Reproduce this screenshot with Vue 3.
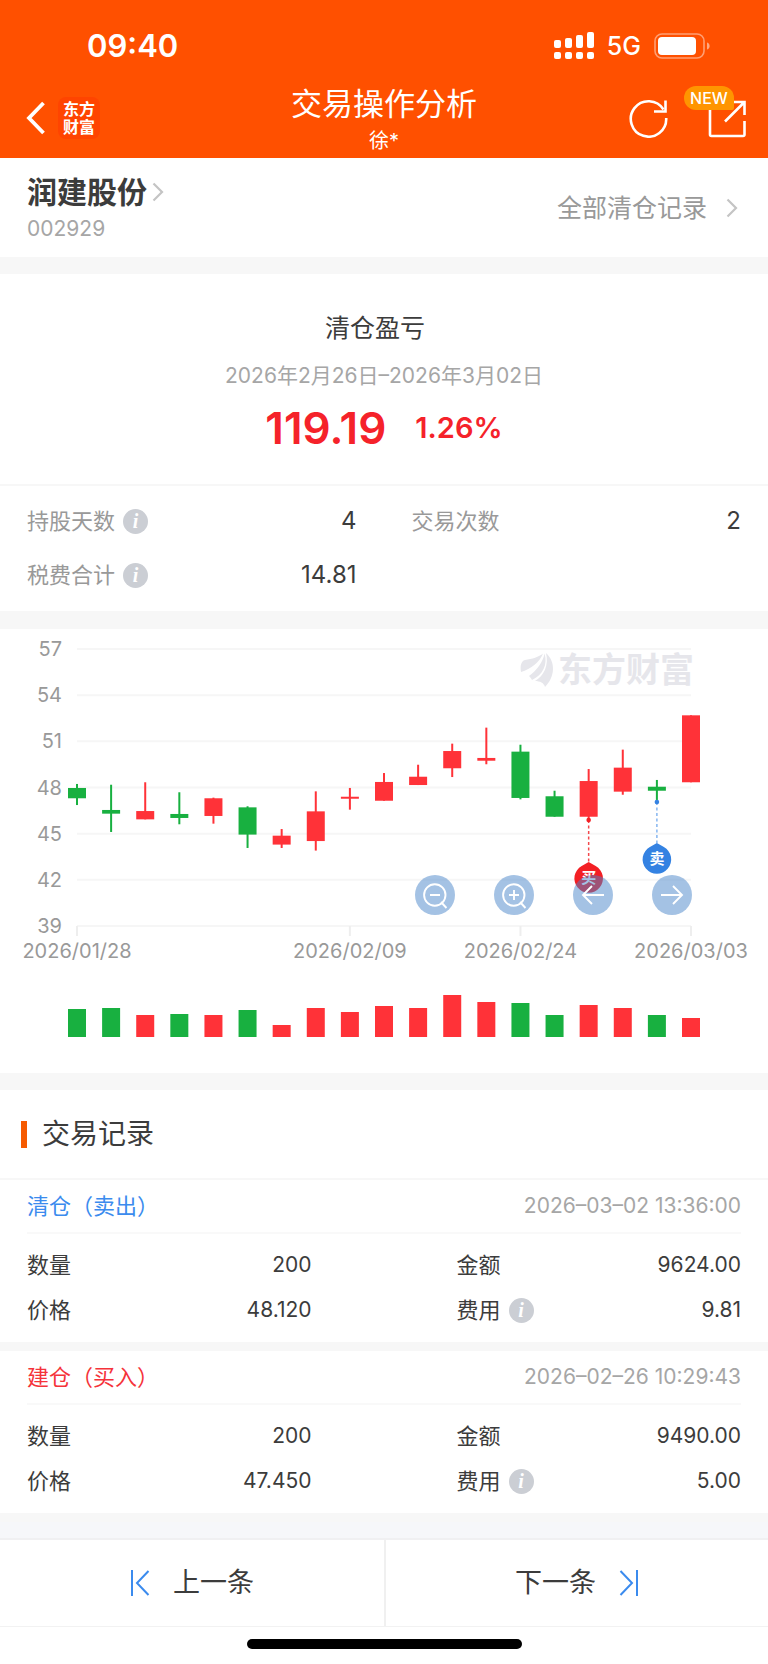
<template>
  <div class="page">
    <header class="header">
      <div class="status-bar">
        <span class="time">09:40</span>
        <div class="status-right">
          <svg class="signal" width="40" height="28" viewBox="0 0 40 28" fill="#fff">
            <rect x="0" y="8" width="7" height="8" rx="2" />
            <rect x="11" y="6" width="7" height="10" rx="2" />
            <rect x="22" y="3" width="7" height="13" rx="2" />
            <rect x="33" y="0" width="7" height="16" rx="2" />
            <rect v-for="x in [0, 11, 22, 33]" :key="x" :x="x" y="20" width="7" height="7" rx="2" />
          </svg>
          <span class="network">5G</span>
          <svg class="battery" width="56" height="26" viewBox="0 0 56 26">
            <rect x="1" y="1" width="49" height="24" rx="7" fill="none" stroke="#fff" stroke-opacity="0.45" stroke-width="1.6" />
            <rect x="4" y="4" width="38" height="18" rx="4" fill="#fff" />
            <path d="M53 9.5c2 .6 2.6 2 2.6 3.5s-.6 2.9-2.6 3.5z" fill="#fff" fill-opacity="0.5" />
          </svg>
        </div>
      </div>
      <nav class="nav">
        <div class="nav-side nav-left">
          <button class="icon-btn" aria-label="返回">
            <svg width="20" height="34" viewBox="0 0 20 34">
              <path d="M17.5 2L3 17L17.5 32" fill="none" stroke="#fff" stroke-width="3.8" />
            </svg>
          </button>
          <a class="brand" href="#"><span>东方</span><span>财富</span></a>
        </div>
        <div class="nav-title">
          <h1>交易操作分析</h1>
          <p>徐*</p>
        </div>
        <div class="nav-side nav-right">
          <button class="icon-btn" aria-label="刷新">
            <svg width="40" height="40" viewBox="0 0 40 40" fill="none" stroke="#fff" stroke-width="2.6">
              <path d="M38.2 20A17.7 17.7 0 1 1 35.5 11.5" />
              <path d="M37.5 2.5V13.5H26" />
            </svg>
          </button>
          <button class="icon-btn share" aria-label="分享">
            <svg width="40" height="40" viewBox="0 0 40 40" fill="none" stroke="#fff" stroke-width="2.6">
              <path d="M4 8V36.5Q4 38 5.5 38H37Q38.5 38 38.5 36.5V23" />
              <path d="M28 4H38.5V17M37.5 5L19 23.5" />
            </svg>
            <span class="badge">NEW</span>
          </button>
        </div>
      </nav>
    </header>

    <section class="stock">
      <a class="stock-main" href="#">
        <span class="stock-name">
          润建股份
          <svg width="12" height="20" viewBox="0 0 12 20"><path d="M1.5 1.5L10 10L1.5 18.5" fill="none" stroke="#c4c4c4" stroke-width="2.2" /></svg>
        </span>
        <span class="stock-code">002929</span>
      </a>
      <a class="all-records" href="#">
        全部清仓记录
        <svg width="12" height="20" viewBox="0 0 12 20"><path d="M1.5 1.5L10 10L1.5 18.5" fill="none" stroke="#c4c4c4" stroke-width="2.2" /></svg>
      </a>
    </section>

    <section class="summary">
      <h2>清仓盈亏</h2>
      <p class="period">2026年2月26日–2026年3月02日</p>
      <p class="profit"><strong>119.19</strong><span>1.26%</span></p>
    </section>

    <dl class="stats">
      <div v-for="s in stats" :key="s.label" class="pair">
        <dt>
          {{ s.label }}
          <button v-if="s.info" class="info" :aria-label="s.label + '说明'">i</button>
        </dt>
        <dd>{{ s.value }}</dd>
      </div>
    </dl>

    <section class="chart">
      <svg class="chart-svg" viewBox="0 0 768 444">
        <g v-for="p in gridPrices" :key="p">
          <line x1="77" x2="691" :y1="priceY(p)" :y2="priceY(p)" stroke="#f6f6f6" stroke-width="2" />
          <text class="axis" x="62" :y="priceY(p) + 7" text-anchor="end">{{ p }}</text>
        </g>
        <g v-for="d in dates" :key="d.text">
          <line :x1="candleX(d.index)" :x2="candleX(d.index)" y1="297" y2="307" stroke="#eee" stroke-width="2" />
          <text class="axis" :x="candleX(d.index)" y="329" text-anchor="middle">{{ d.text }}</text>
        </g>

        <!-- watermark -->
        <g fill="#e6e6eb">
          <path d="M521 43C520 37 521 32 525 31C532 30 539 28 543 24.5C540 33 531 40 521 43Z" />
          <path d="M529 47C537 41 543 33 544.5 24.5C548 35 543 46 532 51C531 49 530 48 529 47Z" />
          <path d="M535 52C544 47 549 36 546 24C556 33 555 48 545 58C544 54 540 52 535 52Z" />
          <text class="watermark" x="558" y="53">东方财富</text>
        </g>

        <g v-for="(c, i) in candles" :key="i" :fill="isUp(c) ? red : green">
          <rect :x="candleX(i) - 1" :y="priceY(c[3])" width="2" :height="priceY(c[2]) - priceY(c[3])" />
          <rect
            :x="candleX(i) - 9"
            :y="priceY(Math.max(c[0], c[1]))"
            width="18"
            :height="priceY(Math.min(c[0], c[1])) - priceY(Math.max(c[0], c[1]))"
          />
          <rect :x="candleX(i) - 9" :y="408 - c[4]" width="18" :height="c[4]" />
        </g>

        <g v-for="m in marks" :key="m.text">
          <line
            :x1="candleX(m.index)"
            :x2="candleX(m.index)"
            :y1="m.from"
            :y2="m.tip"
            :stroke="m.line"
            stroke-width="1.5"
            stroke-dasharray="3 2.5"
          />
          <circle :cx="candleX(m.index)" :cy="m.from" r="2.3" :fill="m.color" />
          <g :transform="`translate(${candleX(m.index)} ${m.tip})`">
            <path d="M0 0L7 4A14.3 14.3 0 1 1 -7 4Z" :fill="m.color" />
            <text class="mark" x="0" y="21" text-anchor="middle">{{ m.text }}</text>
          </g>
        </g>
      </svg>
      <div class="tools">
        <button v-for="t in tools" :key="t.label" :aria-label="t.label">
          <svg width="40" height="40" viewBox="0 0 40 40"><path :d="t.path" fill="none" stroke="#fff" stroke-width="1.9" /></svg>
        </button>
      </div>
    </section>

    <section class="records">
      <h2>交易记录</h2>
      <article v-for="r in records" :key="r.time" class="record">
        <div class="record-head">
          <h3 :class="r.type">{{ r.title }}</h3>
          <time>{{ r.time }}</time>
        </div>
        <dl>
          <div class="pair"><dt>数量</dt><dd>{{ r.count }}</dd></div>
          <div class="pair"><dt>金额</dt><dd>{{ r.amount }}</dd></div>
          <div class="pair"><dt>价格</dt><dd>{{ r.price }}</dd></div>
          <div class="pair">
            <dt>费用 <button class="info" aria-label="费用说明">i</button></dt>
            <dd>{{ r.fee }}</dd>
          </div>
        </dl>
      </article>
    </section>

    <div class="spacer"></div>

    <footer class="pager">
      <button>
        <svg width="20" height="26" viewBox="0 0 20 26"><path d="M2 0V26M18.5 1L7 13L18.5 25" fill="none" stroke="#3b8bee" stroke-width="2" /></svg>
        上一条
      </button>
      <button>
        下一条
        <svg width="20" height="26" viewBox="0 0 20 26"><path d="M18 0V26M1.5 1L13 13L1.5 25" fill="none" stroke="#3b8bee" stroke-width="2" /></svg>
      </button>
    </footer>
    <div class="home-bar"><span></span></div>
  </div>
</template>

<script setup>
const red = '#ff3238'
const green = '#18b040'

const stats = [
  { label: '持股天数', value: '4', info: true },
  { label: '交易次数', value: '2' },
  { label: '税费合计', value: '14.81', info: true },
]

// open, close, low, high, volume
const candles = [
  [47.97, 47.3, 46.86, 48.23, 28],
  [46.54, 46.3, 45.11, 48.18, 29],
  [45.93, 46.47, 45.93, 48.34, 22],
  [46.28, 46.02, 45.61, 47.69, 23],
  [46.15, 47.3, 45.65, 47.34, 22],
  [46.71, 44.94, 44.07, 46.78, 27],
  [44.29, 44.87, 44.07, 45.3, 12],
  [44.52, 46.45, 43.9, 47.75, 29],
  [47.27, 47.4, 46.56, 47.97, 25],
  [47.14, 48.36, 47.14, 48.94, 31],
  [48.16, 48.7, 48.16, 49.48, 29],
  [49.25, 50.37, 48.68, 50.85, 42],
  [49.74, 49.92, 49.51, 51.89, 35],
  [50.33, 47.32, 47.23, 50.78, 34],
  [47.43, 46.1, 46.1, 47.79, 22],
  [46.1, 48.42, 45.93, 49.2, 32],
  [47.73, 49.29, 47.53, 50.46, 29],
  [48.05, 47.79, 47.19, 48.49, 22],
  [48.34, 52.69, 48.34, 52.69, 19],
]

const gridPrices = [57, 54, 51, 48, 45, 42, 39]

const dates = [
  { index: 0, text: '2026/01/28' },
  { index: 8, text: '2026/02/09' },
  { index: 13, text: '2026/02/24' },
  { index: 18, text: '2026/03/03' },
]

const marks = [
  { text: '买', index: 15, from: 191, tip: 233, color: '#f31f24', line: '#f4484c' },
  { text: '卖', index: 17, from: 173, tip: 214, color: '#3482e2', line: '#85b6f0' },
]

const lens = 'M30.5 20A10.7 10.7 0 1 1 9.1 20A10.7 10.7 0 1 1 30.5 20M26 27L31.5 33M15 20H25'
const tools = [
  { label: '缩小', path: lens },
  { label: '放大', path: lens + 'M20 15V25' },
  { label: '左移', path: 'M31 20H10M19 11L10 20L19 29' },
  { label: '右移', path: 'M9 20H30M21 11L30 20L21 29' },
]

const records = [
  { type: 'sell', title: '清仓（卖出）', time: '2026–03–02 13:36:00', count: '200', amount: '9624.00', price: '48.120', fee: '9.81' },
  { type: 'buy', title: '建仓（买入）', time: '2026–02–26 10:29:43', count: '200', amount: '9490.00', price: '47.450', fee: '5.00' },
]

function candleX(i) {
  return 77 + (i * 614) / 18
}

function priceY(p) {
  return 20 + ((57 - p) * 277) / 18
}

function isUp(c) {
  return c[1] > c[0]
}
</script>

<style>
body {
  background: #fff;
}
</style>

<style scoped>
.page {
  font-family: Inter, 'Noto Sans CJK SC', sans-serif;
  font-size: 22px;
  line-height: 32px;
  color: #3c3c3c;
  background: #fff;
}

h1, h2, h3, p, dl, dd {
  margin: 0;
  font-weight: 400;
}

button {
  padding: 0;
  border: 0;
  background: none;
  font: inherit;
  color: inherit;
  cursor: pointer;
}

a {
  color: inherit;
  text-decoration: none;
}

svg {
  display: block;
  flex: none;
}

/* header */
.header {
  background: #ff5000;
  color: #fff;
}

.status-bar {
  display: flex;
  justify-content: space-between;
  align-items: center;
  height: 78px;
  padding: 14px 58px 0 87px;
  box-sizing: border-box;
}

.time {
  font-size: 31px;
  font-weight: 600;
}

.status-right {
  display: flex;
  align-items: center;
  gap: 13px;
}

.network {
  font-size: 25px;
  font-weight: 500;
}

.nav {
  display: grid;
  grid-template-columns: 1fr auto 1fr;
  align-items: center;
  height: 80px;
  padding: 0 22px;
}

.nav-side {
  display: flex;
  align-items: center;
}

.nav-left {
  gap: 12px;
  padding-left: 4px;
}

.nav-right {
  justify-content: flex-end;
  gap: 38px;
}

.brand {
  display: flex;
  flex-direction: column;
  padding: 3px 5px;
  border-radius: 8px;
  background: #ff4400;
  font-size: 16px;
  font-weight: 700;
  line-height: 18px;
}

.nav-title {
  padding-top: 2px;
  text-align: center;
}

.nav-title h1 {
  font-size: 31px;
  line-height: 44px;
}

.nav-title p {
  font-size: 20px;
  line-height: 30px;
}

.share {
  position: relative;
}

.badge {
  position: absolute;
  top: -12px;
  left: -22px;
  width: 50px;
  border-radius: 12px 12px 2px 12px;
  background: #ff9500;
  font-size: 16px;
  font-weight: 500;
  line-height: 24px;
}

/* stock */
.stock {
  display: flex;
  justify-content: space-between;
  align-items: center;
  height: 99px;
  padding: 0 30px 0 27px;
}

.stock-main {
  display: flex;
  flex-direction: column;
  padding-top: 3px;
}

.stock-name {
  display: flex;
  align-items: center;
  gap: 5px;
  font-size: 30px;
  font-weight: 700;
  line-height: 40px;
}

.stock-code {
  font-size: 21px;
  line-height: 34px;
  color: #a6a6a6;
}

.all-records {
  display: flex;
  align-items: center;
  gap: 19px;
  font-size: 25px;
  color: #999;
}

/* summary */
.summary {
  padding: 38px 0 28px;
  border-top: 17px solid #f7f7f7;
  text-align: center;
}

.summary h2 {
  padding-right: 18px;
  font-size: 25px;
}

.period {
  margin-top: 16px;
  font-size: 21px;
  color: #a6a6a6;
}

.profit {
  display: flex;
  justify-content: center;
  align-items: center;
  gap: 29px;
  margin-top: 8px;
  line-height: 56px;
  color: #f5222a;
}

.profit strong {
  font-size: 44px;
  font-weight: 600;
}

.profit span {
  font-size: 29px;
  font-weight: 600;
}

/* label and value pairs */
.pair {
  display: flex;
  justify-content: space-between;
  align-items: center;
}

.pair dt {
  display: flex;
  align-items: center;
  gap: 8px;
}

.info {
  width: 25px;
  height: 25px;
  border-radius: 50%;
  background: #cbced4;
  color: #fff;
  font: italic 700 20px/25px 'Liberation Serif', serif;
}

.stats {
  display: grid;
  grid-template-columns: 1fr 1fr;
  gap: 22px 55px;
  padding: 19px 27px 20px;
  border-top: 2px solid #f7f7f7;
}

.stats dt {
  color: #999;
}

.stats dd {
  font-size: 24px;
}

/* chart */
.chart {
  position: relative;
  border-top: 18px solid #f7f7f7;
}

.chart-svg {
  width: 100%;
}

.axis {
  font-size: 20px;
  fill: #999;
}

.watermark {
  font-size: 34px;
  font-weight: 700;
}

.mark {
  font-size: 15px;
  font-weight: 700;
  fill: #fff;
}

.tools {
  position: absolute;
  top: 246px;
  right: 76px;
  display: flex;
  gap: 39px;
}

.tools button {
  width: 40px;
  height: 40px;
  border-radius: 50%;
  background: rgba(74, 134, 202, 0.5);
}

/* records */
.records {
  border-top: 17px solid #f7f7f7;
}

.records h2 {
  display: flex;
  align-items: center;
  gap: 15px;
  height: 88px;
  padding-left: 21px;
  border-bottom: 2px solid #f7f7f7;
  font-size: 28px;
}

.records h2::before {
  content: '';
  width: 6px;
  height: 27px;
  background: #f65a00;
}

.record {
  padding: 0 27px;
  border-bottom: 9px solid #f7f7f7;
}

.record-head {
  display: flex;
  justify-content: space-between;
  align-items: center;
  height: 52px;
  border-bottom: 2px solid #f9f9f9;
}

.record-head time {
  color: #a6a6a6;
}

.sell {
  color: #3b8bee;
}

.buy {
  color: #f5333a;
}

.record dl {
  display: grid;
  grid-template-columns: 1fr 1fr;
  gap: 13px 145px;
  padding: 15px 0 16px;
}

.record h3 {
  font-size: 22px;
}

.record dd,
.record-head time {
  font-size: 21px;
}

.spacer {
  height: 16px;
  background: #f6f7fa;
}

/* pager */
.pager {
  display: grid;
  grid-template-columns: 1fr 1fr;
  height: 86px;
  border-top: 2px solid #f0f0f2;
  border-bottom: 1px solid #f2f2f2;
}

.pager button {
  display: flex;
  justify-content: center;
  align-items: center;
  gap: 23px;
  font-size: 27px;
}

.pager button + button {
  border-left: 2px solid #f0f0f0;
}

.home-bar {
  display: flex;
  justify-content: center;
  padding: 12px 0 15px;
}

.home-bar span {
  width: 275px;
  height: 10px;
  border-radius: 5px;
  background: #000;
}
</style>
